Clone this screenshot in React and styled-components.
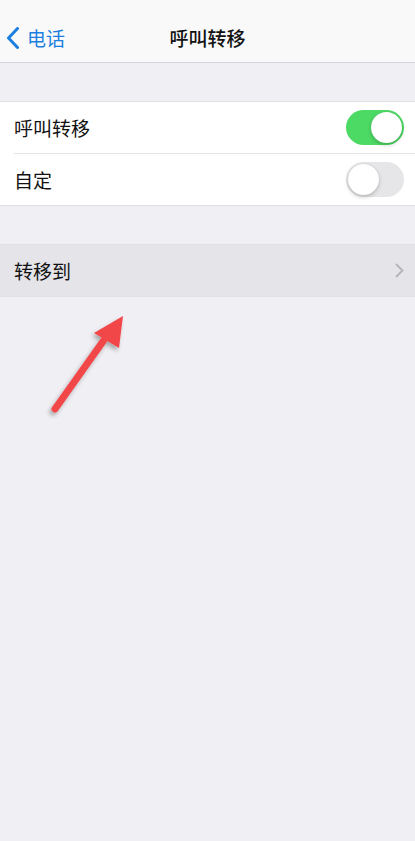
import React from "react"
import styled, { createGlobalStyle } from "styled-components"

const GlobalStyle = createGlobalStyle`
  html, body {
    margin: 0;
    padding: 0;
    background: #efeff4;
    font-family: "Noto Sans CJK SC", "Noto Sans", sans-serif;
  }
`

const Screen = styled.div`
  width: 415px;
  height: 841px;
  background: #efeff4;
  position: relative;
  overflow: hidden;
`

const NavBar = styled.div`
  height: 63px;
  background: #f9f9f9;
  border-bottom: 1px solid #d6d6da;
  display: flex;
  align-items: center;
  justify-content: center;
  position: relative;
  box-sizing: border-box;
  padding-top: 13px;
`

const BackButton = styled.div`
  position: absolute;
  left: 7px;
  top: 24px;
  display: flex;
  align-items: center;
  gap: 8px;
  color: #1a7fe0;
  font-size: 19px;
`

const Title = styled.div`
  font-size: 19px;
  color: #111;
  font-weight: 500;
`

const Group = styled.div`
  margin-top: ${props => props.gap}px;
  background: ${props => (props.highlight ? "#e4e4e9" : "#fff")};
  border-top: 1px solid #e0e0e4;
  border-bottom: 1px solid #e0e0e4;
`

const Row = styled.div`
  height: 51px;
  display: flex;
  align-items: center;
  justify-content: space-between;
  padding: 0 11px 0 14px;
  font-size: 19px;
  color: #111;

  & + & {
    border-top: 1px solid #e4e4e8;
    margin-left: 14px;
    padding-left: 0;
  }
`

const Toggle = styled.div`
  width: 58px;
  height: 35px;
  border-radius: 18px;
  box-sizing: border-box;
  background: ${props => (props.on ? "#4cd964" : "#e6e6e8")};
  position: relative;
`

const Knob = styled.div`
  width: 31px;
  height: 31px;
  border-radius: 50%;
  background: #fff;
  position: absolute;
  top: 2px;
  left: ${props => (props.on ? "25px" : "2px")};
  box-shadow: 0 2px 4px rgba(0, 0, 0, 0.2), 0 0 1px rgba(0, 0, 0, 0.15);
`

const Arrow = styled.svg`
  position: absolute;
  left: 0;
  top: 0;
  pointer-events: none;
`

const Switch = ({ on }) => (
  <Toggle on={on}>
    <Knob on={on} />
  </Toggle>
)

const App = () => {
  return (
    <Screen>
      <GlobalStyle />
      <NavBar>
        <BackButton>
          <svg width="12" height="22" viewBox="0 0 12 22">
            <path d="M10.5 1.5 L1.5 11 L10.5 20.5" fill="none" stroke="#1a7fe0" strokeWidth="3" strokeLinecap="round" strokeLinejoin="round" />
          </svg>
          <span>电话</span>
        </BackButton>
        <Title>呼叫转移</Title>
      </NavBar>
      <Group gap={38}>
        <Row>
          <span>呼叫转移</span>
          <Switch on />
        </Row>
        <Row>
          <span>自定</span>
          <Switch />
        </Row>
      </Group>
      <Group gap={38} highlight>
        <Row>
          <span>转移到</span>
          <svg width="9" height="15" viewBox="0 0 9 15">
            <path d="M1.5 1.5 L7.5 7.5 L1.5 13.5" fill="none" stroke="#b4b4b9" strokeWidth="1.8" strokeLinecap="round" />
          </svg>
        </Row>
      </Group>
      <Arrow width="415" height="841" viewBox="0 0 415 841">
        <defs>
          <filter id="sh" x="-50%" y="-50%" width="200%" height="200%">
            <feDropShadow dx="-2" dy="3" stdDeviation="2" floodColor="#000" floodOpacity="0.3" />
          </filter>
        </defs>
        <g filter="url(#sh)">
          <line x1="55" y1="409" x2="104" y2="340" stroke="#f2464a" strokeWidth="7" strokeLinecap="round" />
          <polygon points="123,316 94,333 119,348" fill="#f2464a" />
        </g>
      </Arrow>
    </Screen>
  )
}

export default App
